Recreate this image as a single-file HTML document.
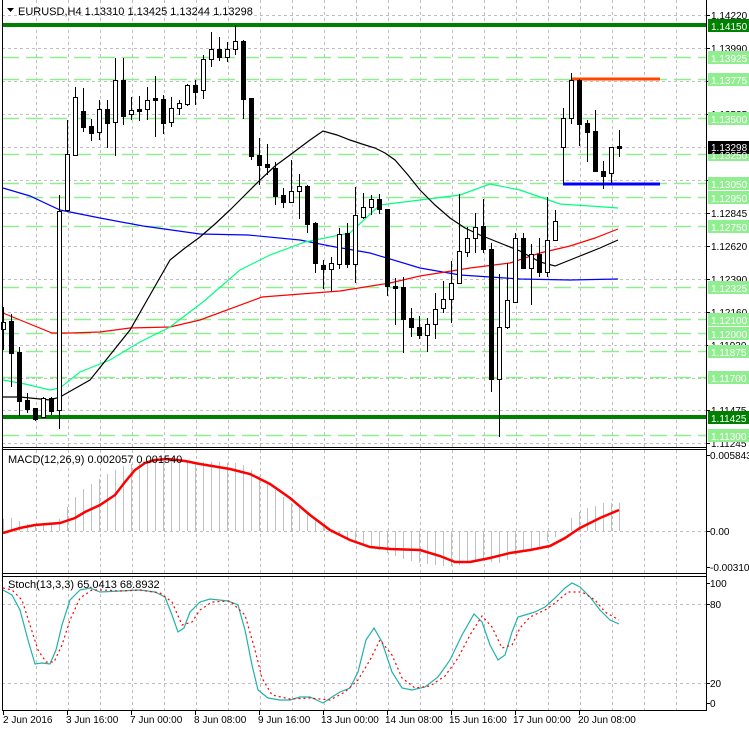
<!DOCTYPE html>
<html><head><meta charset="utf-8"><style>
html,body{margin:0;padding:0;background:#fff;width:749px;height:731px;overflow:hidden}
svg{display:block;font-family:"Liberation Sans",sans-serif;font-size:11px}
.ax{font-size:10px}
</style></head><body>
<svg width="749" height="731" viewBox="0 0 749 731" xmlns="http://www.w3.org/2000/svg">
<rect width="749" height="731" fill="#fff"/>
<g stroke="#c0c0c0" stroke-dasharray="3,3" shape-rendering="crispEdges">
<path d="M36.5 0V710M68.5 0V710M100.5 0V710M132.5 0V710M164.5 0V710M196.5 0V710M228.5 0V710M260.5 0V710M292.5 0V710M324.5 0V710M356.5 0V710M388.5 0V710M420.5 0V710M452.5 0V710M484.5 0V710M516.5 0V710M548.5 0V710M580.5 0V710M612.5 0V710M644.5 0V710M676.5 0V710"/>
<path d="M2 15.5H706M2 48.5H706M2 81.5H706M2 114.5H706M2 147.5H706M2 180.5H706M2 213.5H706M2 246.5H706M2 279.5H706M2 312.5H706M2 345.5H706M2 378.5H706M2 410.5H706M2 443.5H706M2 531.5H706M2 604.5H706M2 683.5H706"/>
</g>
<g stroke="#90ee90" stroke-width="1.5" stroke-dasharray="17,7">
<path d="M2 57.5H706M2 79.5H706M2 118.5H706M2 154.5H706M2 183.5H706M2 197.5H706M2 226.5H706M2 287.5H706M2 319.5H706M2 333.5H706M2 351.5H706M2 377.5H706M2 435.5H706"/>
</g>
<path d="M2 25H706M2 417H706" stroke="#008000" stroke-width="4"/>
<g fill="none" stroke-width="1.2">
<polyline stroke="#0000ff" points="3,188 30,196 60,210 100,218 143,226 200,234 248,235 300,240 330,246 370,253 420,268 460,275 520,279 570,280 618,279"/>
<polyline stroke="#ff0000" points="3,313 25,322 52,333 70,333 100,332 130,328 170,327 200,320 262,297 340,291 390,283 420,276 470,268 510,263 540,253 570,246 595,238 618,229"/>
<polyline stroke="#00ff7f" points="3,380 25,384 50,390 60,388 80,372 110,360 140,342 170,327 203,302 240,270 270,255 305,242 350,233 380,205 420,200 460,195 490,184 520,190 560,204 590,206 618,208"/>
<polyline stroke="#000" points="3,397 20,397 50,400 60,397 90,380 110,355 130,330 150,295 170,260 185,248 200,237 215,224 230,210 245,195 260,180 275,166 290,155 310,140 323,131 337,135 350,140 362,144 375,148 385,153 395,160 408,175 420,190 435,205 450,218 465,228 480,235 500,243 520,251 540,262 555,266 575,258 600,248 618,240"/>
</g>
<path d="M571 79H660" stroke="#ff4500" stroke-width="3"/>
<path d="M563 184H660" stroke="#0000ff" stroke-width="3"/>
<g stroke="#000" stroke-width="1" shape-rendering="crispEdges">
<path d="M3.5 307V350M11.5 314V387M19.5 347V416M27.5 393V413M35.5 408V421M43.5 397V417M51.5 397V415M59.5 195V429M67.5 120V212M75.5 87V156M83.5 88V132M91.5 119V141M99.5 100V140M107.5 100V148M115.5 58V156M123.5 58V125M131.5 97V120M139.5 96V121M147.5 87V120M155.5 76V137M163.5 95V134M171.5 97V127M179.5 100V115M187.5 84V106M195.5 80V105M203.5 55V99M211.5 32V67M219.5 37V61M227.5 42V62M235.5 25V55M243.5 40V119M251.5 98V160M259.5 138V185M267.5 144V175M275.5 162V205M283.5 188V208M291.5 160V203M299.5 174V219M307.5 185V233M315.5 222V273M323.5 260V289M331.5 257V291M339.5 228V269M347.5 223V268M355.5 187V283M363.5 193V219M371.5 195V215M379.5 194V214M387.5 209V296M395.5 278V325M403.5 277V353M411.5 308V337M419.5 316V339M427.5 318V352M435.5 293V339M443.5 281V313M451.5 261V323M459.5 194V283M467.5 227V257M475.5 213V253M483.5 199V253M491.5 243V392M499.5 274V437M507.5 263V329M515.5 233V303M523.5 233V268M531.5 244V305M539.5 238V277M547.5 197V277M555.5 210V241M563.5 108V183M571.5 73V124M579.5 79V146M587.5 120V162M595.5 110V171M603.5 161V189M611.5 147V183M619.5 130V157"/>
<g fill="#fff">
<rect x="1.5" y="322.5" width="4" height="7"/><rect x="41.5" y="398.5" width="4" height="19"/><rect x="57.5" y="211.5" width="4" height="199"/><rect x="65.5" y="154.5" width="4" height="56"/><rect x="73.5" y="97.5" width="4" height="58"/><rect x="97.5" y="109.5" width="4" height="23"/><rect x="113.5" y="80.5" width="4" height="42"/><rect x="129.5" y="110.5" width="4" height="4"/><rect x="145.5" y="100.5" width="4" height="9"/><rect x="169.5" y="108.5" width="4" height="14"/><rect x="177.5" y="103.5" width="4" height="5"/><rect x="185.5" y="85.5" width="4" height="19"/><rect x="201.5" y="59.5" width="4" height="31"/><rect x="209.5" y="49.5" width="4" height="10"/><rect x="225.5" y="49.5" width="4" height="8"/><rect x="233.5" y="41.5" width="4" height="8"/><rect x="289.5" y="191.5" width="4" height="11"/><rect x="297.5" y="186.5" width="4" height="5"/><rect x="329.5" y="263.5" width="4" height="6"/><rect x="337.5" y="234.5" width="4" height="30"/><rect x="353.5" y="215.5" width="4" height="49"/><rect x="361.5" y="207.5" width="4" height="10"/><rect x="369.5" y="199.5" width="4" height="8"/><rect x="425.5" y="324.5" width="4" height="11"/><rect x="433.5" y="309.5" width="4" height="15"/><rect x="441.5" y="299.5" width="4" height="9"/><rect x="449.5" y="283.5" width="4" height="16"/><rect x="457.5" y="251.5" width="4" height="32"/><rect x="465.5" y="238.5" width="4" height="14"/><rect x="473.5" y="227.5" width="4" height="11"/><rect x="497.5" y="327.5" width="4" height="52"/><rect x="505.5" y="300.5" width="4" height="27"/><rect x="513.5" y="238.5" width="4" height="64"/><rect x="529.5" y="254.5" width="4" height="14"/><rect x="545.5" y="240.5" width="4" height="32"/><rect x="553.5" y="221.5" width="4" height="19"/><rect x="561.5" y="118.5" width="4" height="29"/><rect x="569.5" y="80.5" width="4" height="38"/><rect x="609.5" y="147.5" width="4" height="26"/>
</g>
<g fill="#000">
<rect x="9.5" y="321.5" width="4" height="32"/><rect x="17.5" y="352.5" width="4" height="49"/><rect x="25.5" y="400.5" width="4" height="9"/><rect x="33.5" y="408.5" width="4" height="11"/><rect x="49.5" y="398.5" width="4" height="13"/><rect x="81.5" y="111.5" width="4" height="16"/><rect x="89.5" y="126.5" width="4" height="7"/><rect x="105.5" y="109.5" width="4" height="14"/><rect x="121.5" y="80.5" width="4" height="36"/><rect x="137.5" y="109.5" width="4" height="2"/><rect x="153.5" y="98.5" width="4" height="2"/><rect x="161.5" y="99.5" width="4" height="24"/><rect x="193.5" y="85.5" width="4" height="7"/><rect x="217.5" y="49.5" width="4" height="8"/><rect x="241.5" y="41.5" width="4" height="58"/><rect x="249.5" y="98.5" width="4" height="58"/><rect x="257.5" y="155.5" width="4" height="10"/><rect x="265.5" y="164.5" width="4" height="3"/><rect x="273.5" y="168.5" width="4" height="28"/><rect x="281.5" y="195.5" width="4" height="7"/><rect x="305.5" y="186.5" width="4" height="38"/><rect x="313.5" y="223.5" width="4" height="40"/><rect x="321.5" y="265.5" width="4" height="4"/><rect x="345.5" y="233.5" width="4" height="31"/><rect x="377.5" y="199.5" width="4" height="10"/><rect x="385.5" y="209.5" width="4" height="77"/><rect x="393.5" y="286.5" width="4" height="2"/><rect x="401.5" y="287.5" width="4" height="32"/><rect x="409.5" y="318.5" width="4" height="9"/><rect x="417.5" y="327.5" width="4" height="8"/><rect x="481.5" y="226.5" width="4" height="23"/><rect x="489.5" y="249.5" width="4" height="130"/><rect x="521.5" y="238.5" width="4" height="30"/><rect x="537.5" y="254.5" width="4" height="18"/><rect x="577.5" y="80.5" width="4" height="44"/><rect x="585.5" y="123.5" width="4" height="9"/><rect x="593.5" y="131.5" width="4" height="40"/><rect x="601.5" y="171.5" width="4" height="5"/><rect x="617.5" y="146.5" width="4" height="2"/>
</g>
</g>
<path d="M7 8h7l-3.5 4z" fill="#000"/>
<text x="18" y="15" fill="#000">EURUSD,H4  1.13310 1.13425 1.13244 1.13298</text>
<path stroke="#c0c0c0" stroke-width="1" shape-rendering="crispEdges" d="M3.5 531V519M11.5 531V518M19.5 531V521M27.5 531V524M35.5 531V524M43.5 531V523M51.5 531V523M59.5 531V519M67.5 531V507M75.5 531V497M83.5 531V489M91.5 531V484M99.5 531V479M107.5 531V474M115.5 531V470M123.5 531V466M131.5 531V464M139.5 531V462M147.5 531V461M155.5 531V460M163.5 531V461M171.5 531V462M179.5 531V463M187.5 531V462M195.5 531V463M203.5 531V462M211.5 531V462M219.5 531V462M227.5 531V463M235.5 531V463M243.5 531V465M251.5 531V470M259.5 531V476M267.5 531V483M275.5 531V490M283.5 531V497M291.5 531V503M299.5 531V508M307.5 531V513M315.5 531V520M323.5 531V527M331.5 531V533M339.5 531V536M347.5 531V540M355.5 531V543M363.5 531V546M371.5 531V548M379.5 531V550M387.5 531V553M395.5 531V556M403.5 531V559M411.5 531V561M419.5 531V563M427.5 531V564M435.5 531V565M443.5 531V566M451.5 531V566M459.5 531V565M467.5 531V563M475.5 531V560M483.5 531V558M491.5 531V562M499.5 531V563M507.5 531V560M515.5 531V555M523.5 531V551M531.5 531V549M539.5 531V546M547.5 531V541M555.5 531V537M563.5 531V530M571.5 531V518M579.5 531V512M587.5 531V508M595.5 531V506M603.5 531V503M611.5 531V503M619.5 531V503"/>
<polyline fill="none" stroke="#ff0000" stroke-width="2.5" points="3,533 20,528 35,525 60,523 75,518 85,512 100,505 115,495 125,482 135,470 145,463 155,460 168,459 185,461 200,464 230,469 250,474 270,484 290,498 310,515 330,530 350,540 370,547 390,549 420,550 440,556 455,562 470,562 490,558 510,553 530,550 550,546 565,538 580,528 600,518 619,510"/>
<text x="8" y="463" fill="#000">MACD(12,26,9) 0.002057 0.001540</text>
<polyline fill="none" stroke="#20b2aa" stroke-width="1.2" points="3,590 12,595 20,610 28,640 35,664 42,663 50,664 56,650 62,625 70,600 80,590 90,588 100,592 120,591 140,590 155,592 165,597 172,615 178,632 184,628 190,612 200,602 210,599 228,601 238,605 245,630 252,665 258,690 268,698 280,700 290,700 300,697 310,697 323,703 332,697 340,692 350,688 358,672 366,640 374,628 382,642 392,672 402,688 412,690 425,687 438,677 450,660 462,635 474,614 482,622 490,645 498,660 505,655 512,632 518,617 525,615 535,612 545,607 555,598 565,588 572,583 580,587 590,597 600,610 610,620 619,624"/>
<polyline fill="none" stroke="#ff0000" stroke-width="1.2" stroke-dasharray="2,3" points="3,588 12,590 22,600 30,625 38,650 46,662 54,662 62,645 70,620 80,598 92,590 104,590 120,591 140,590 160,593 172,602 182,625 192,622 200,610 212,602 230,601 245,615 255,650 262,678 272,695 290,699 310,698 330,700 345,692 358,680 370,660 380,640 392,655 402,678 415,688 430,686 445,676 458,658 470,635 482,616 492,627 502,648 512,645 520,628 530,617 545,610 555,603 568,592 582,592 595,600 605,612 619,620"/>
<text x="8" y="588" fill="#000">Stoch(13,3,3) 65.0413 68.8932</text>
<g stroke="#000" stroke-width="1" shape-rendering="crispEdges" fill="none">
<path d="M2.5 0V711M706.5 0V711M2 447.5H706M2 449.5H706M2 573.5H706M2 576.5H706M2 710.5H706"/>
<path d="M3.5 711V715M67.5 711V715M131.5 711V715M195.5 711V715M259.5 711V715M323.5 711V715M387.5 711V715M451.5 711V715M515.5 711V715M579.5 711V715"/>
<path d="M706 15.5h4M706 48.5h4M706 81.5h4M706 114.5h4M706 180.5h4M706 213.5h4M706 246.5h4M706 279.5h4M706 312.5h4M706 345.5h4M706 410.5h4M706 443.5h4M706 455.5h4M706 531.5h4M706 567.5h4M706 583.5h4M706 604.5h4M706 683.5h4M706 703.5h4"/>
</g>
<g fill="#000" class="ax">
<text x="3" y="723">2 Jun 2016</text><text x="66" y="723">3 Jun 16:00</text><text x="130" y="723">7 Jun 00:00</text><text x="194" y="723">8 Jun 08:00</text><text x="258" y="723">9 Jun 16:00</text><text x="321" y="723">13 Jun 00:00</text><text x="385" y="723">14 Jun 08:00</text><text x="449" y="723">15 Jun 16:00</text><text x="513" y="723">17 Jun 00:00</text><text x="578" y="723">20 Jun 08:00</text>
</g>
<g fill="#000" class="ax">
<text x="711" y="19">1.14220</text><text x="711" y="52">1.13990</text><text x="711" y="85">1.13760</text><text x="711" y="118">1.13535</text><text x="711" y="184">1.13075</text><text x="711" y="217">1.12845</text><text x="711" y="250">1.12620</text><text x="711" y="283">1.12390</text><text x="711" y="316">1.12160</text><text x="711" y="349">1.11930</text><text x="711" y="414">1.11475</text><text x="711" y="447">1.11245</text>
<text x="710" y="459">0.005843</text><text x="710" y="535">0.00</text><text x="710" y="571">-0.003109</text>
<text x="710" y="587">100</text><text x="710" y="608">80</text><text x="710" y="687">20</text><text x="710" y="707">0</text>
</g>
<g fill="#90ee90">
<rect x="708" y="51" width="41" height="13"/><rect x="708" y="73" width="41" height="13"/><rect x="708" y="112" width="41" height="13"/><rect x="708" y="148" width="41" height="13"/><rect x="708" y="177" width="41" height="13"/><rect x="708" y="191" width="41" height="13"/><rect x="708" y="220" width="41" height="13"/><rect x="708" y="281" width="41" height="13"/><rect x="708" y="313" width="41" height="13"/><rect x="708" y="327" width="41" height="13"/><rect x="708" y="345" width="41" height="13"/><rect x="708" y="371" width="41" height="13"/><rect x="708" y="429" width="41" height="13"/>
</g>
<rect x="708" y="19" width="41" height="13" fill="#008000"/>
<rect x="708" y="411" width="41" height="13" fill="#008000"/>
<rect x="708" y="141" width="41" height="13" fill="#000"/>
<g fill="#fff" class="ax">
<text x="711" y="30">1.14150</text><text x="711" y="62">1.13925</text><text x="711" y="84">1.13775</text><text x="711" y="123">1.13500</text><text x="711" y="151">1.13298</text><text x="711" y="159">1.13250</text><text x="711" y="188">1.13050</text><text x="711" y="202">1.12950</text><text x="711" y="231">1.12750</text><text x="711" y="292">1.12325</text><text x="711" y="324">1.12100</text><text x="711" y="338">1.12000</text><text x="711" y="356">1.11875</text><text x="711" y="382">1.11700</text><text x="711" y="422">1.11425</text><text x="711" y="440">1.11300</text>
</g>
</svg>
</body></html>
